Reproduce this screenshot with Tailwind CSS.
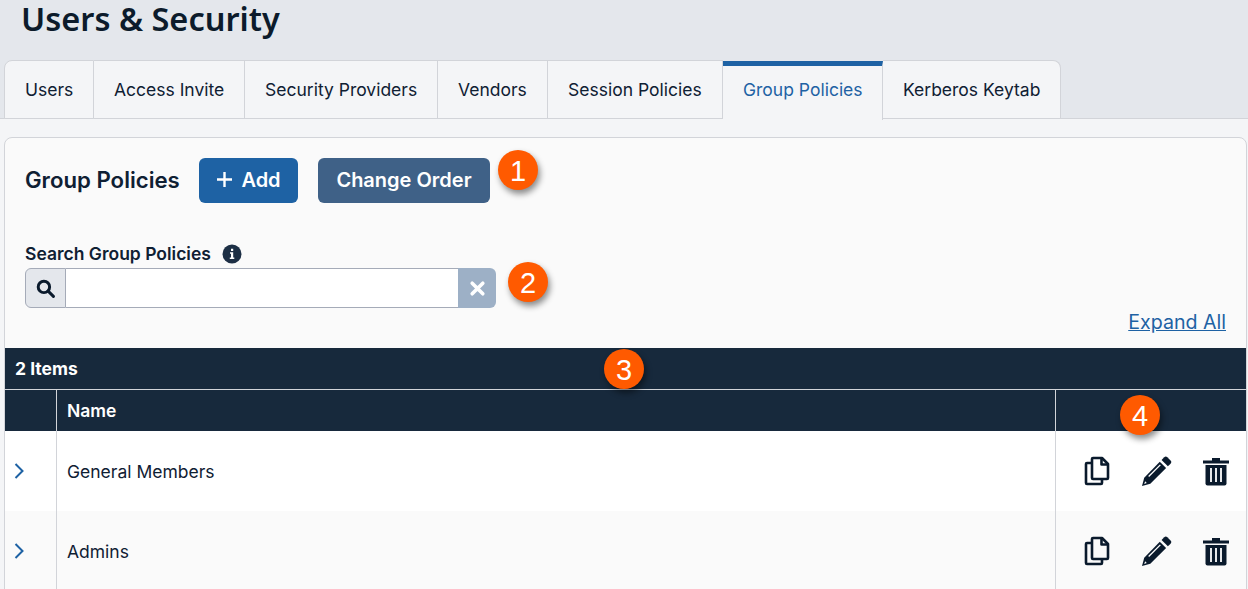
<!DOCTYPE html>
<html lang="en">
<head>
    <meta charset="UTF-8">
    <meta name="viewport" content="width=device-width, initial-scale=1.0">
    <script src="https://cdn.jsdelivr.net/npm/@tailwindcss/browser@4"></script>
    <title>Users &amp; Security</title>
</head>
<body class="bg-[#f4f5f7] font-['Inter',sans-serif] text-[#0f2033]">
<div class="relative h-[589px] w-[1248px] overflow-hidden">
    <!-- Page header and tabs -->
    <div class="h-[119px] bg-[#e4e7ec] border-b border-[#d2d4d9] pl-1">
        <h1 class="h-[60px] pl-[17px] font-['Noto_Sans',sans-serif] text-[32.5px] leading-[37px] font-semibold text-[#0c1b2b]">Users &amp; Security</h1>
        <div class="flex h-[59px] text-[17.5px]">
            <div class="flex items-center w-[90px] pl-5 pt-[2px] bg-[#f4f5f7] border border-[#d2d4d9] rounded-tl-lg">Users</div>
            <div class="flex items-center w-[151px] pl-5 pt-[2px] bg-[#f4f5f7] border-y border-r border-[#d2d4d9]">Access Invite</div>
            <div class="flex items-center w-[193px] pl-5 pt-[2px] bg-[#f4f5f7] border-y border-r border-[#d2d4d9]">Security Providers</div>
            <div class="flex items-center w-[110px] pl-5 pt-[2px] bg-[#f4f5f7] border-y border-r border-[#d2d4d9]">Vendors</div>
            <div class="flex items-center w-[175px] pl-5 pt-[2px] bg-[#f4f5f7] border-y border-r border-[#d2d4d9]">Session Policies</div>
            <div class="flex items-center w-[160px] h-[59px] mt-px pl-5 pb-[5px] bg-[#f4f5f7] border-t-[5px] border-r border-t-[#1e62a4] border-r-[#d2d4d9] text-[#1e62a4]">Group Policies</div>
            <div class="flex items-center w-[178px] pl-5 pt-[2px] bg-[#f4f5f7] border-y border-r border-[#d2d4d9] rounded-tr-lg">Kerberos Keytab</div>
        </div>
    </div>

    <!-- Panel -->
    <div class="mt-[18px] ml-1 mr-px bg-[#fafafa] border border-[#d2d4d9] rounded-t-lg h-[470px]">
        <div class="flex items-center gap-5 pl-5 pt-5">
            <h2 class="w-[154px] pb-[2px] text-[22.2px] font-semibold whitespace-nowrap">Group Policies</h2>
            <button class="flex items-center justify-center gap-2 w-[99px] h-[45px] pb-[2px] bg-[#1e62a4] text-white text-[20px] font-semibold rounded-md">
                <svg width="17" height="17" viewBox="0 0 17 17" fill="none" stroke="white" stroke-width="2.4"><path d="M8.500 1v15M1 8.500h15"/></svg>
                Add
            </button>
            <button class="w-[172px] h-[45px] pb-[2px] bg-[#3f6187] text-white text-[20px] font-semibold rounded-md">Change Order</button>
        </div>

        <div class="pl-5 mt-[40px] flex items-center gap-[11px] h-[22px]">
            <label class="text-[17.5px] font-semibold">Search Group Policies</label>
            <svg width="20" height="20" viewBox="0 0 20 20"><circle cx="10" cy="10" r="9.500" fill="#1d2f45"/><path d="M8 8.200h3.200v5.300h1.100V15H7.800v-1.500h1.200V9.700H8zM9 4.800h2.200v2.100H9z" fill="white"/></svg>
        </div>
        <div class="ml-5 mt-[3px] flex w-[471px] h-10">
            <div class="flex items-center justify-center w-[41px] bg-[#e4e7ec] border border-[#a5abb8] rounded-l-md">
                <svg width="19" height="19" viewBox="0 0 18 18" fill="none" stroke="#0a1a2c" stroke-width="2.800"><circle cx="7.500" cy="7.500" r="5.400"/><path d="M11.500 11.500l5 5" stroke-linecap="round"/></svg>
            </div>
            <div class="w-[392px] bg-white border-y border-[#a5abb8]"></div>
            <div class="flex items-center justify-center w-[38px] bg-[#9db0c6] rounded-r-md">
                <svg width="17" height="17" viewBox="0 0 16 16" fill="none" stroke="white" stroke-width="3.400" stroke-linecap="round"><path d="M3 3l10 10M13 3L3 13"/></svg>
            </div>
        </div>
        <div class="-mt-[4px] mb-[6px] h-[38px] pr-5 flex justify-end items-center">
            <a href="#" class="text-[19.6px] text-[#1e62a4] underline">Expand All</a>
        </div>

        <!-- Table -->
        <div class="h-[41px] flex items-center pl-2.5 pt-[2px] bg-[#17293c] text-white text-[17.5px] font-bold">2 Items</div>
        <div class="flex h-[42px] bg-[#17293c] border-t border-[#d2d4d9] text-white text-[17.5px] font-semibold">
            <div class="w-[52px] border-r border-[#d2d4d9]"></div>
            <div class="flex-1 flex items-center pl-2.5 pt-[2px] border-r border-[#d2d4d9]">Name</div>
            <div class="w-[190px]"></div>
        </div>
        <div class="flex h-[80px] bg-white text-[17.5px]">
            <div class="w-[52px] flex items-center pl-[9px] border-r border-[#d2d4d9]">
                <svg width="10" height="16" viewBox="0 0 10 16" fill="none" stroke="#1e62a4" stroke-width="2"><path d="M1.500 1l7 7-7 7"/></svg>
            </div>
            <div class="flex-1 flex items-center pl-2.5 pt-[3px] border-r border-[#d2d4d9]">General Members</div>
            <div class="w-[190px] flex items-center pl-[28px] gap-[32px]">
                <svg width="26" height="30" viewBox="0 0 26 30" fill="none" stroke="#0a1a2c" stroke-width="2.600" stroke-linejoin="round"><path d="M9 2h9l6 6v14a1 1 0 0 1-1 1H9a1 1 0 0 1-1-1V3a1 1 0 0 1 1-1z"/><path d="M17.500 2v6.500H24"/><path d="M8 7H3a1 1 0 0 0-1 1v19a1 1 0 0 0 1 1h14a1 1 0 0 0 1-1v-4"/></svg>
                <svg width="30" height="30" viewBox="2 2 27 27"><path d="M22 3.200a2 2 0 0 1 2.800 0l2.900 2.900a2 2 0 0 1 0 2.800l-2.400 2.400-5.700-5.700z" fill="#0a1a2c"/><path d="M18 7.200l5.700 5.700L9.500 27 2 29l2-7.500z" fill="#0a1a2c"/><path d="M8 20.500l10.500-10.500" stroke="white" stroke-width="1.200"/><path d="M4.800 24.800l1.500 1.500-2.300.8z" fill="white"/></svg>
                <svg class="-ml-px" width="26" height="30" viewBox="0 0 26 30"><path d="M0 4.500h26v3H0zM9 2h8v3H9z" fill="#0a1a2c"/><path d="M2.500 9h21v18.500a2 2 0 0 1-2 2h-17a2 2 0 0 1-2-2z" fill="#0a1a2c"/><path d="M8 12v14M13 12v14M18 12v14" stroke="white" stroke-width="1.800"/></svg>
            </div>
        </div>
        <div class="flex h-[80px] bg-[#fafafa] text-[17.5px]">
            <div class="w-[52px] flex items-center pl-[9px] border-r border-[#d2d4d9]">
                <svg width="10" height="16" viewBox="0 0 10 16" fill="none" stroke="#1e62a4" stroke-width="2"><path d="M1.500 1l7 7-7 7"/></svg>
            </div>
            <div class="flex-1 flex items-center pl-2.5 pt-[3px] border-r border-[#d2d4d9]">Admins</div>
            <div class="w-[190px] flex items-center pl-[28px] gap-[32px]">
                <svg width="26" height="30" viewBox="0 0 26 30" fill="none" stroke="#0a1a2c" stroke-width="2.600" stroke-linejoin="round"><path d="M9 2h9l6 6v14a1 1 0 0 1-1 1H9a1 1 0 0 1-1-1V3a1 1 0 0 1 1-1z"/><path d="M17.500 2v6.500H24"/><path d="M8 7H3a1 1 0 0 0-1 1v19a1 1 0 0 0 1 1h14a1 1 0 0 0 1-1v-4"/></svg>
                <svg width="30" height="30" viewBox="2 2 27 27"><path d="M22 3.200a2 2 0 0 1 2.800 0l2.900 2.900a2 2 0 0 1 0 2.800l-2.400 2.400-5.700-5.700z" fill="#0a1a2c"/><path d="M18 7.200l5.700 5.700L9.500 27 2 29l2-7.500z" fill="#0a1a2c"/><path d="M8 20.500l10.500-10.500" stroke="white" stroke-width="1.200"/><path d="M4.800 24.800l1.500 1.500-2.300.8z" fill="white"/></svg>
                <svg class="-ml-px" width="26" height="30" viewBox="0 0 26 30"><path d="M0 4.500h26v3H0zM9 2h8v3H9z" fill="#0a1a2c"/><path d="M2.500 9h21v18.500a2 2 0 0 1-2 2h-17a2 2 0 0 1-2-2z" fill="#0a1a2c"/><path d="M8 12v14M13 12v14M18 12v14" stroke="white" stroke-width="1.800"/></svg>
            </div>
        </div>
    </div>

    <!-- Annotation badges -->
    <div class="absolute left-[498px] top-[150px] flex items-center justify-center w-10 h-10 pt-[4px] rounded-full bg-[#ff5a00] text-white text-[29px] font-['Liberation_Sans',sans-serif] shadow-[2px_4px_6px_rgba(0,0,0,0.45)]">1</div>
    <div class="absolute left-[508px] top-[262px] flex items-center justify-center w-10 h-10 pt-[4px] rounded-full bg-[#ff5a00] text-white text-[29px] font-['Liberation_Sans',sans-serif] shadow-[2px_4px_6px_rgba(0,0,0,0.45)]">2</div>
    <div class="absolute left-[604px] top-[349px] flex items-center justify-center w-10 h-10 pt-[4px] rounded-full bg-[#ff5a00] text-white text-[29px] font-['Liberation_Sans',sans-serif] shadow-[2px_4px_6px_rgba(0,0,0,0.45)]">3</div>
    <div class="absolute left-[1120px] top-[395px] flex items-center justify-center w-10 h-10 pt-[4px] rounded-full bg-[#ff5a00] text-white text-[29px] font-['Liberation_Sans',sans-serif] shadow-[2px_4px_6px_rgba(0,0,0,0.45)]">4</div>
</div>
</body>
</html>
